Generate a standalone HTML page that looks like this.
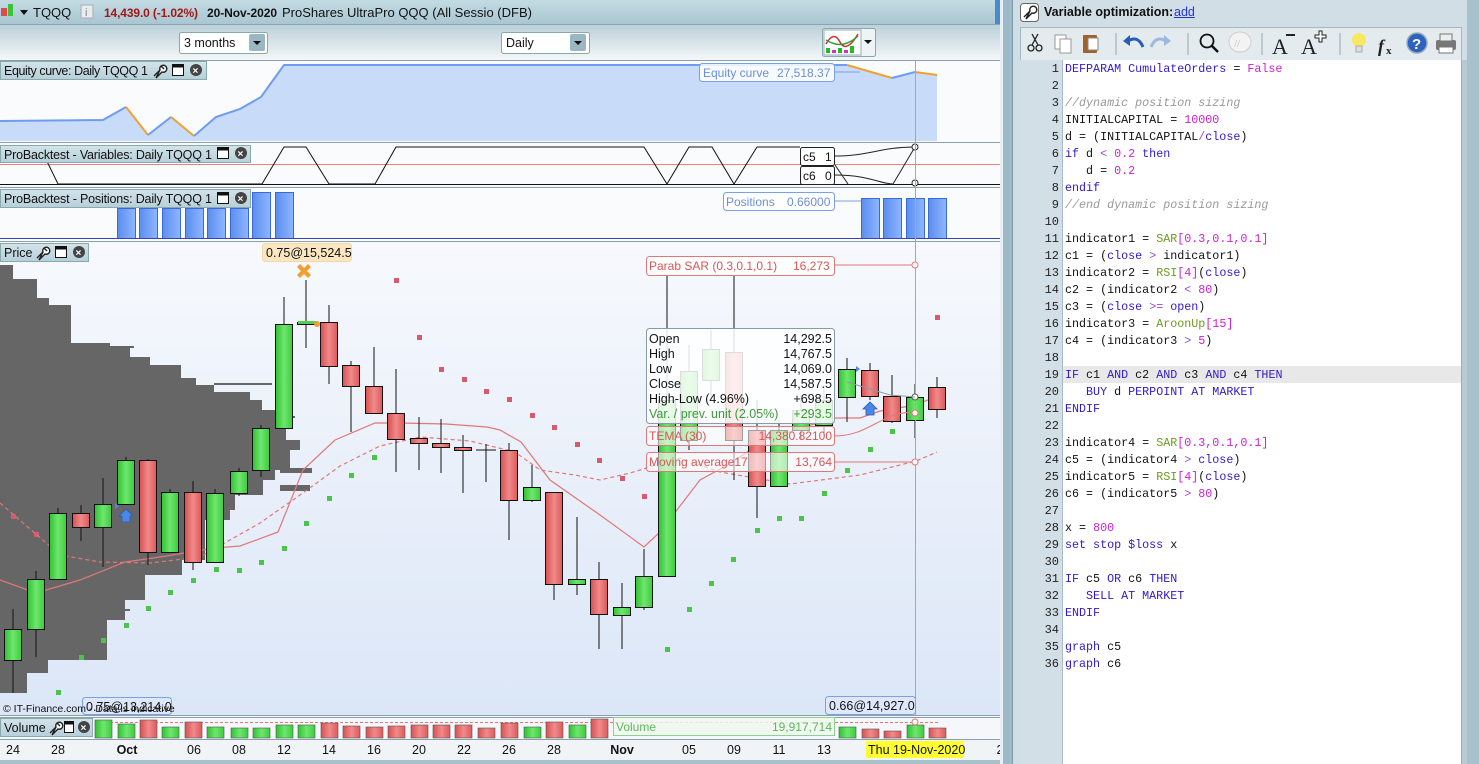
<!DOCTYPE html>
<html><head><meta charset="utf-8"><style>
*{margin:0;padding:0;box-sizing:border-box}
body{width:1479px;height:764px;overflow:hidden;background:#d1dee5;font-family:"Liberation Sans",sans-serif;position:relative}
.abs{position:absolute}
.code{position:absolute;left:1063px;top:60px;width:398px;height:704px;background:#fff}
.gut{position:absolute;left:1020px;top:60px;width:43px;height:704px;background:#d3dfe6;border-right:1px solid #a9bcc6}
.ln{position:absolute;right:4px;font:12px "Liberation Mono",monospace;color:#222;text-align:right}
.cl{position:absolute;left:2px;font:11.7px "Liberation Mono",monospace;color:#111;white-space:pre;letter-spacing:0}
.k{color:#3318cc}.n{color:#d21ed2}.c{color:#999;font-style:italic}.f{color:#6d9a1e}.o{color:#9a4ad0}
</style></head><body>
<svg class="abs" style="left:0;top:0" width="1000" height="764" xmlns="http://www.w3.org/2000/svg" font-family="Liberation Sans, sans-serif">
<defs>
<linearGradient id="tb" x1="0" y1="0" x2="0" y2="1"><stop offset="0" stop-color="#c4dbe3"/><stop offset="1" stop-color="#a9c6d2"/></linearGradient>
<linearGradient id="tb2" x1="0" y1="0" x2="0" y2="1"><stop offset="0" stop-color="#b9cfd8"/><stop offset="1" stop-color="#f4f7f8"/></linearGradient>
<linearGradient id="pr" x1="0" y1="0" x2="0" y2="1"><stop offset="0" stop-color="#f7f9fd"/><stop offset="1" stop-color="#dbe6f7"/></linearGradient>
<linearGradient id="gr" x1="0" y1="0" x2="1" y2="0"><stop offset="0" stop-color="#2fc22f"/><stop offset=".5" stop-color="#6fe66f"/><stop offset="1" stop-color="#3ccc3c"/></linearGradient>
<linearGradient id="rd" x1="0" y1="0" x2="1" y2="0"><stop offset="0" stop-color="#d85050"/><stop offset=".5" stop-color="#f08a8a"/><stop offset="1" stop-color="#dd5a5a"/></linearGradient>
<linearGradient id="bl" x1="0" y1="0" x2="1" y2="0"><stop offset="0" stop-color="#5b8ef0"/><stop offset="1" stop-color="#8fb6ff"/></linearGradient>
<linearGradient id="hd" x1="0" y1="0" x2="0" y2="1"><stop offset="0" stop-color="#d3e3ea"/><stop offset="1" stop-color="#b7cfd9"/></linearGradient>
<g id="wr"><path d="M1 13L7 7M7 7A3.5 3.5 0 1 1 9 9L3 15Z M8 3L11 6" stroke="#222" stroke-width="1.4" fill="#fff"/></g>
</defs>
<rect width="1000" height="764" fill="#f5f7f8"/>
<rect x="0" y="0" width="1000" height="24" fill="url(#tb)"/>
<rect x="995" y="0" width="5" height="24" fill="#4a88d0"/>
<rect x="1" y="8" width="6" height="8" fill="#e04a4a"/><rect x="8" y="4" width="5" height="12" fill="#3ac43a"/>
<path d="M20 10h8l-4 5z" fill="#111"/>
<text x="33" y="17" font-size="13" fill="#111">TQQQ</text>
<rect x="81" y="5" width="12" height="13" fill="#e8ecee" stroke="#aab"/><text x="85" y="16" font-size="11" fill="#888">i</text>
<text x="104" y="17" font-size="12" font-weight="bold" fill="#a01818" textLength="94">14,439.0 (-1.02%)</text>
<text x="207" y="17" font-size="12" font-weight="bold" fill="#111" textLength="70">20-Nov-2020</text>
<text x="282" y="17" font-size="13" fill="#111">ProShares UltraPro QQQ (All Sessio (DFB)</text>
<rect x="0" y="24" width="1000" height="36" fill="url(#tb2)"/>
<line x1="0" y1="24.5" x2="1000" y2="24.5" stroke="#8aa4b0"/>
<rect x="179.5" y="32.5" width="88" height="21" rx="2" fill="#fff" stroke="#8aa"/><text x="184" y="47" font-size="12.5" fill="#111">3 months</text>
<rect x="249" y="34" width="16" height="17" rx="2" fill="#9bb7c4"/><path d="M253 41h8l-4 4z" fill="#111"/>
<rect x="501.5" y="32.5" width="88" height="21" rx="2" fill="#fff" stroke="#8aa"/><text x="506" y="47" font-size="12.5" fill="#111">Daily</text>
<rect x="570" y="34" width="16" height="17" rx="2" fill="#9bb7c4"/><path d="M574 41h8l-4 4z" fill="#111"/>
<rect x="822.5" y="28.5" width="53" height="28" rx="2" fill="#eef3f5" stroke="#8aa"/>
<rect x="824" y="30" width="37" height="25" fill="#fff" stroke="#9ab"/>
<path d="M826 44q8-14 14-2t18-8" stroke="#c33" fill="none" stroke-width="1.5"/><path d="M826 40q10 6 18 4t14-8" stroke="#393" fill="none" stroke-width="1.5"/>
<rect x="826" y="48" width="4" height="5" fill="#2b2"/><rect x="832" y="50" width="4" height="3" fill="#c3c"/><rect x="838" y="48" width="4" height="5" fill="#2b2"/><rect x="844" y="50" width="4" height="3" fill="#c3c"/><rect x="850" y="46" width="4" height="7" fill="#2b2"/>
<path d="M864 40h8l-4 4z" fill="#111"/>
<rect x="0" y="60" width="1000" height="82" fill="#fafbfd"/>
<line x1="0" y1="60.5" x2="1000" y2="60.5" stroke="#8aa0ab"/>
<path d="M0 121L103 120L126 107L148 135L171 117L194 136L216 117L240 109L261 97L284 65L847 65L892 78L915 72L937 75L937 141L0 141Z" fill="#c8dcfa"/>
<path d="M0 121L103 120L126 107" stroke="#6f9cf0" stroke-width="2" fill="none"/>
<path d="M126 107L148 135" stroke="#f0a030" stroke-width="2"/><path d="M148 135L171 117" stroke="#6f9cf0" stroke-width="2"/>
<path d="M171 117L194 136" stroke="#f0a030" stroke-width="2"/>
<path d="M194 136L216 117L240 109L261 97L284 65L847 65" stroke="#6f9cf0" stroke-width="2" fill="none"/>
<path d="M847 65L892 78" stroke="#f0a030" stroke-width="2"/><path d="M892 78L915 72" stroke="#6f9cf0" stroke-width="2"/><path d="M915 72L937 75" stroke="#f0a030" stroke-width="2"/>
<rect x="0.5" y="61.5" width="206" height="18" fill="url(#hd)" stroke="#8aa"/>
<text x="4" y="75" font-size="12.5" fill="#111" textLength="144">Equity curve: Daily TQQQ 1</text>
<use href="#wr" x="153" y="63"/>
<rect x="172.5" y="64.5" width="11" height="11" fill="#fff" stroke="#111"/><rect x="172.5" y="64.5" width="11" height="3" fill="#111"/>
<circle cx="196" cy="70" r="6" fill="#444"/><text x="192.5" y="74" font-size="10" fill="#fff" font-weight="bold">×</text>
<rect x="699.5" y="63.5" width="135" height="18" rx="3" fill="#fff" fill-opacity=".85" stroke="#7aa0e8"/>
<text x="703" y="77" font-size="12" fill="#6b8fd8">Equity curve</text><text x="777" y="77" font-size="12" fill="#6b8fd8">27,518.37</text>
<line x1="834" y1="72" x2="860" y2="72" stroke="#7aa0e8"/>
<rect x="0" y="142" width="1000" height="44" fill="#fafbfd"/>
<line x1="0" y1="142.5" x2="1000" y2="142.5" stroke="#8aa0ab"/>
<line x1="0" y1="164.5" x2="1000" y2="164.5" stroke="#f08080"/>
<line x1="0" y1="184.5" x2="1000" y2="184.5" stroke="#111"/>
<path d="M40 147L58 184L262 184L284 147L306 147L329 184L375 184L396 147L644 147L667 184L689 147L712 147L734 184L757 147L800 147" stroke="#111" fill="none"/>
<path d="M834 156C870 156 880 147 915 147M834 175C870 175 880 184 893 184L915 147M835 165L848 184" stroke="#222" fill="none"/>
<circle cx="915" cy="147" r="3" fill="#fff" stroke="#222"/><circle cx="915" cy="183" r="3" fill="#fff" stroke="#222"/>
<rect x="800.5" y="147.5" width="34" height="18" rx="2" fill="#fff" stroke="#222"/><text x="803" y="161" font-size="12" fill="#111">c5</text><text x="825" y="161" font-size="12" fill="#111">1</text>
<rect x="800.5" y="166.5" width="34" height="18" rx="2" fill="#fff" stroke="#222"/><text x="803" y="180" font-size="12" fill="#111">c6</text><text x="825" y="180" font-size="12" fill="#111">0</text>
<rect x="0.5" y="145.5" width="250" height="17" fill="url(#hd)" stroke="#8aa"/>
<text x="4" y="159" font-size="12.5" fill="#111" textLength="208">ProBacktest - Variables: Daily TQQQ 1</text>
<rect x="217.5" y="147.5" width="11" height="11" fill="#fff" stroke="#111"/><rect x="217.5" y="147.5" width="11" height="3" fill="#111"/>
<circle cx="241" cy="153" r="6" fill="#444"/><text x="237.5" y="157" font-size="10" fill="#fff" font-weight="bold">×</text>
<rect x="0" y="187" width="1000" height="54" fill="#fafbfd"/>
<line x1="0" y1="187.5" x2="1000" y2="187.5" stroke="#8aa0ab"/>
<g fill="url(#bl)" stroke="#3a6ad8">
<rect x="117.5" y="208.5" width="18" height="30"/><rect x="139.5" y="208.5" width="18" height="30"/><rect x="162.5" y="208.5" width="18" height="30"/><rect x="185.5" y="208.5" width="18" height="30"/><rect x="207.5" y="208.5" width="18" height="30"/><rect x="230.5" y="208.5" width="18" height="30"/>
<rect x="252.5" y="192.5" width="18" height="46"/><rect x="275.5" y="192.5" width="18" height="46"/>
<rect x="861.5" y="198.5" width="18" height="40"/><rect x="883.5" y="198.5" width="18" height="40"/><rect x="906.5" y="198.5" width="18" height="40"/><rect x="928.5" y="198.5" width="18" height="40"/>
</g>
<line x1="0" y1="238.5" x2="1000" y2="238.5" stroke="#3344bb"/>
<rect x="723.5" y="192.5" width="111" height="18" rx="3" fill="#fff" fill-opacity=".9" stroke="#7aa0e8"/>
<text x="726" y="206" font-size="12" fill="#6b8fd8">Positions</text><text x="787" y="206" font-size="12" fill="#6b8fd8">0.66000</text>
<line x1="834" y1="201" x2="861" y2="201" stroke="#7aa0e8"/>
<rect x="0.5" y="189.5" width="250" height="18" fill="url(#hd)" stroke="#8aa"/>
<text x="4" y="203" font-size="12.5" fill="#111" textLength="208">ProBacktest - Positions: Daily TQQQ 1</text>
<rect x="217.5" y="192.5" width="11" height="11" fill="#fff" stroke="#111"/><rect x="217.5" y="192.5" width="11" height="3" fill="#111"/>
<circle cx="241" cy="198" r="6" fill="#444"/><text x="237.5" y="202" font-size="10" fill="#fff" font-weight="bold">×</text>
<rect x="0" y="241" width="1000" height="475" fill="url(#pr)"/>
<line x1="0" y1="241.5" x2="1000" y2="241.5" stroke="#8aa0ab"/>
<path d="M0 265H13V279H37V298H49V305H71V343H110V348H130V357H150V365H181V378H196V385H214V392H250V400H262V410H280V420H292V428H286V440H300V450H290V470H275V480H263V495H235V510H230V520H205V560H182V575H145V600H125V620H107V660H48V673H27V693H0Z" fill="#666"/>
<g fill="#666"><rect x="110" y="346" width="24" height="2"/><rect x="214" y="383" width="58" height="2"/><rect x="255" y="416" width="40" height="2"/><rect x="280" y="468" width="32" height="5"/><rect x="280" y="485" width="30" height="6"/><rect x="200" y="440" width="97" height="3"/><rect x="130" y="570" width="20" height="2"/><rect x="107" y="609" width="23" height="2"/></g>
<g fill="#d85a6e"><rect x="11" y="514" width="5" height="5"/><rect x="34" y="532" width="5" height="5"/><rect x="394" y="278" width="5" height="5"/><rect x="417" y="335" width="5" height="5"/><rect x="439" y="367" width="5" height="5"/><rect x="462" y="377" width="5" height="5"/><rect x="484" y="389" width="5" height="5"/><rect x="507" y="397" width="5" height="5"/><rect x="530" y="413" width="5" height="5"/><rect x="552" y="425" width="5" height="5"/><rect x="575" y="442" width="5" height="5"/><rect x="597" y="458" width="5" height="5"/><rect x="620" y="476" width="5" height="5"/><rect x="642" y="494" width="5" height="5"/><rect x="935" y="315" width="5" height="5"/></g>
<g fill="#4cc44c"><rect x="56" y="690" width="5" height="5"/><rect x="79" y="655" width="5" height="5"/><rect x="101" y="638" width="5" height="5"/><rect x="124" y="623" width="5" height="5"/><rect x="146" y="606" width="5" height="5"/><rect x="168" y="590" width="5" height="5"/><rect x="191" y="578" width="5" height="5"/><rect x="214" y="567" width="5" height="5"/><rect x="237" y="568" width="5" height="5"/><rect x="259" y="560" width="5" height="5"/><rect x="282" y="546" width="5" height="5"/><rect x="304" y="521" width="5" height="5"/><rect x="327" y="496" width="5" height="5"/><rect x="349" y="473" width="5" height="5"/><rect x="372" y="455" width="5" height="5"/><rect x="665" y="647" width="5" height="5"/><rect x="687" y="607" width="5" height="5"/><rect x="709" y="581" width="5" height="5"/><rect x="731" y="557" width="5" height="5"/><rect x="755" y="528" width="5" height="5"/><rect x="777" y="516" width="5" height="5"/><rect x="799" y="516" width="5" height="5"/><rect x="822" y="491" width="5" height="5"/><rect x="845" y="468" width="5" height="5"/><rect x="868" y="447" width="5" height="5"/><rect x="890" y="429" width="5" height="5"/></g>
<polyline points="0,580 36,593 80,580 125,562 160,557 215,548 240,546 278,532 303,470 335,440 375,423 400,423 446,424 487,427 500,430 521,442 550,480 600,515 644,547 660,532 700,480 733,462 764,440 833,418 860,418 880,411 916,405 937,396" fill="none" stroke="#e07878" stroke-width="1.2"/>
<polyline points="0,503 60,555 100,562 150,563 200,557 260,523 300,495 340,466 380,446 420,437 470,441 515,452 540,470 575,475 600,480 630,473 680,458 720,472 790,484 860,475 916,461 937,452" fill="none" stroke="#e07878" stroke-width="1.2" stroke-dasharray="4,3"/>
<g stroke="#111" stroke-width="1">
<path d="M13 609V693M36 571V657M58 508V579M81 505V541M103 478V567M126 457V504M148 459V565M170 489V552M193 481V570M215 489V562M239 468V496M261 425V477M284 297V428M306 280V348M329 305V384M351 361V432M374 347V413M396 369V472M419 417V470M441 419V473M463 435V493M486 444V482M476 450H496M509 443V540M532 465V502M554 492V600M577 517V595M599 562V649M622 583V649M644 549V610M667 276V576M689 345V450M711 330V400M734 276V480M757 400V518M779 420V486M801 395V440M824 385V435M847 358V422M870 363V400M892 375V423M915 384V438M937 377V418"/>
<g fill="url(#gr)">
<rect x="4.5" y="629.5" width="17" height="31"/><rect x="27.5" y="579.5" width="17" height="50"/><rect x="49.5" y="513.5" width="17" height="66"/><rect x="94.5" y="504.5" width="17" height="23"/><rect x="117.5" y="460.5" width="17" height="44"/><rect x="161.5" y="492.5" width="17" height="60"/><rect x="206.5" y="493.5" width="17" height="69"/><rect x="230.5" y="471.5" width="17" height="22"/><rect x="252.5" y="428.5" width="17" height="42"/><rect x="275.5" y="324.5" width="17" height="104"/><rect x="297.5" y="322.5" width="17" height="2"/><rect x="523.5" y="487.5" width="17" height="13"/><rect x="568.5" y="579.5" width="17" height="5"/><rect x="613.5" y="607.5" width="17" height="8"/><rect x="635.5" y="576.5" width="17" height="31"/><rect x="658.5" y="400.5" width="17" height="176"/><rect x="680.5" y="371.5" width="17" height="69"/><rect x="702.5" y="349.5" width="17" height="31"/><rect x="770.5" y="430.5" width="17" height="56"/><rect x="792.5" y="410.5" width="17" height="20"/><rect x="815.5" y="400.5" width="17" height="25"/><rect x="838.5" y="369.5" width="17" height="28"/><rect x="906.5" y="397.5" width="17" height="23"/>
</g>
<g fill="url(#rd)">
<rect x="72.5" y="513.5" width="17" height="14"/><rect x="139.5" y="460.5" width="17" height="92"/><rect x="184.5" y="492.5" width="17" height="70"/><rect x="320.5" y="322.5" width="17" height="44"/><rect x="342.5" y="365.5" width="17" height="21"/><rect x="365.5" y="386.5" width="17" height="27"/><rect x="387.5" y="413.5" width="17" height="26"/><rect x="410.5" y="438.5" width="17" height="5"/><rect x="432.5" y="443.5" width="17" height="4"/><rect x="454.5" y="447.5" width="17" height="3"/><rect x="500.5" y="450.5" width="17" height="50"/><rect x="545.5" y="492.5" width="17" height="92"/><rect x="590.5" y="579.5" width="17" height="35"/><rect x="725.5" y="352.5" width="17" height="88"/><rect x="748.5" y="430.5" width="17" height="56"/><rect x="861.5" y="370.5" width="17" height="26"/><rect x="883.5" y="396.5" width="17" height="25"/><rect x="928.5" y="387.5" width="17" height="22"/>
</g></g>
<rect x="298" y="321" width="18" height="3" fill="#5c5"/>
<path d="M300 264l4 4 4-4 3 3-4 4 4 4-3 3-4-4-4 4-3-3 4-4-4-4z" fill="#f0a030"/>
<circle cx="317" cy="324" r="3" fill="#f0a030"/>
<path d="M122 522v-6h-3l7-7 7 7h-3v6z" fill="#4a88e8" stroke="#2a5ab8" stroke-width=".8"/>
<path d="M866 415v-6h-3l7-7 7 7h-3v6z" fill="#4a88e8" stroke="#2a5ab8" stroke-width=".8"/>
<path d="M115 503l4 3-4 3z M856 366l4 3-4 3z" fill="#4a88e8"/>
<line x1="915.5" y1="60" x2="915.5" y2="738" stroke="#f08890"/>
<path d="M834 265H915M834 462H915M834 436C870 436 880 412 915 412" stroke="#e07878" fill="none"/>
<circle cx="915" cy="265" r="3" fill="#fff" stroke="#e07878"/><circle cx="915" cy="462" r="3" fill="#fff" stroke="#e07878"/><circle cx="915" cy="413" r="3" fill="#fff" stroke="#e07878"/><circle cx="915" cy="397" r="3" fill="#fff" stroke="#555"/>
<path d="M847 382L890 395L915 397" stroke="#8a9aa8" fill="none"/>
<rect x="646.5" y="256.5" width="188" height="19" rx="3" fill="#fff" fill-opacity=".9" stroke="#e07878"/>
<text x="649" y="270" font-size="12" fill="#d55">Parab SAR (0.3,0.1,0.1)</text><text x="793" y="270" font-size="12" fill="#d55">16,273</text>
<rect x="646.5" y="328.5" width="188" height="95" rx="3" fill="#fff" fill-opacity=".86" stroke="#8a9aa8"/>
<g font-size="12.5" fill="#111"><text x="649" y="343">Open</text><text x="649" y="358">High</text><text x="649" y="373">Low</text><text x="649" y="388">Close</text><text x="649" y="403">High-Low (4.96%)</text>
<text x="832" y="343" text-anchor="end">14,292.5</text><text x="832" y="358" text-anchor="end">14,767.5</text><text x="832" y="373" text-anchor="end">14,069.0</text><text x="832" y="388" text-anchor="end">14,587.5</text><text x="832" y="403" text-anchor="end">+698.5</text></g>
<text x="649" y="418" font-size="12.5" fill="#3a9a3a">Var. / prev. unit (2.05%)</text><text x="832" y="418" font-size="12.5" fill="#3a9a3a" text-anchor="end">+293.5</text>
<rect x="646.5" y="426.5" width="188" height="19" rx="3" fill="#fff" fill-opacity=".6" stroke="#e07878"/>
<text x="649" y="440" font-size="12" fill="#d55">TEMA (30)</text><text x="832" y="440" font-size="12" fill="#d55" text-anchor="end">14,380.82100</text>
<rect x="646.5" y="452.5" width="188" height="19" rx="3" fill="#fff" fill-opacity=".6" stroke="#e07878"/>
<text x="649" y="466" font-size="12" fill="#d55">Moving average17</text><text x="832" y="466" font-size="12" fill="#d55" text-anchor="end">13,764</text>
<rect x="262.5" y="243.5" width="89" height="18" rx="3" fill="#fbe6c2" stroke="#f2d7a8"/>
<text x="266" y="257" font-size="12.5" fill="#111">0.75@15,524.5</text>
<rect x="82.5" y="697.5" width="89" height="17" rx="3" fill="#dfe8fa" stroke="#7aa0e8"/>
<text x="86" y="711" font-size="12.5" fill="#111">0.75@13,214.0</text>
<text x="3" y="712" font-size="10.5" fill="#111">© IT-Finance.com - Data is indicative</text>
<rect x="825.5" y="696.5" width="90" height="18" rx="3" fill="#dfe8fa" stroke="#7aa0e8"/>
<text x="829" y="710" font-size="12.5" fill="#111">0.66@14,927.0</text>
<rect x="0.5" y="243.5" width="88" height="18" fill="url(#hd)" stroke="#8aa"/>
<text x="4" y="257" font-size="12.5" fill="#111">Price</text>
<use href="#wr" x="36" y="245"/>
<rect x="55.5" y="246.5" width="11" height="11" fill="#fff" stroke="#111"/><rect x="55.5" y="246.5" width="11" height="3" fill="#111"/>
<circle cx="79" cy="252" r="6" fill="#444"/><text x="75.5" y="256" font-size="10" fill="#fff" font-weight="bold">×</text>
<rect x="0" y="715" width="1000" height="24" fill="#f5f7fa"/>
<line x1="0" y1="715.5" x2="1000" y2="715.5" stroke="#8aa0ab"/><line x1="0" y1="717.5" x2="1000" y2="717.5" stroke="#8aa0ab"/>
<line x1="90" y1="722.5" x2="940" y2="722.5" stroke="#e07878" stroke-dasharray="3,2"/>
<g stroke="#555" stroke-width=".6">
<rect x="95" y="720" width="17" height="18" fill="url(#gr)"/><rect x="118" y="724" width="17" height="14" fill="url(#gr)"/><rect x="140" y="720" width="17" height="18" fill="url(#rd)"/><rect x="162" y="727" width="17" height="11" fill="url(#gr)"/><rect x="185" y="722" width="17" height="16" fill="url(#rd)"/><rect x="207" y="727" width="17" height="11" fill="url(#gr)"/><rect x="231" y="728" width="17" height="10" fill="url(#gr)"/><rect x="253" y="728" width="17" height="10" fill="url(#gr)"/><rect x="276" y="725" width="17" height="13" fill="url(#gr)"/><rect x="298" y="725" width="17" height="13" fill="url(#gr)"/><rect x="321" y="723" width="17" height="15" fill="url(#rd)"/><rect x="343" y="726" width="17" height="12" fill="url(#rd)"/><rect x="366" y="727" width="17" height="11" fill="url(#rd)"/><rect x="388" y="726" width="17" height="12" fill="url(#rd)"/><rect x="411" y="725" width="17" height="13" fill="url(#rd)"/><rect x="433" y="725" width="17" height="13" fill="url(#rd)"/><rect x="455" y="725" width="17" height="13" fill="url(#rd)"/><rect x="478" y="728" width="17" height="10" fill="url(#rd)"/><rect x="501" y="723" width="17" height="15" fill="url(#rd)"/><rect x="524" y="727" width="17" height="11" fill="url(#gr)"/><rect x="546" y="722" width="17" height="16" fill="url(#rd)"/><rect x="569" y="725" width="17" height="13" fill="url(#gr)"/><rect x="591" y="719" width="17" height="19" fill="url(#rd)"/><rect x="839" y="727" width="17" height="11" fill="url(#gr)"/><rect x="862" y="729" width="17" height="9" fill="url(#rd)"/><rect x="884" y="731" width="17" height="7" fill="url(#rd)"/><rect x="907" y="725" width="17" height="13" fill="url(#gr)"/><rect x="929" y="728" width="17" height="10" fill="url(#rd)"/>
</g>
<rect x="613.5" y="717.5" width="221" height="18" fill="#eef8ee" fill-opacity=".85" stroke="#8fd08f"/>
<text x="616" y="731" font-size="12" fill="#5cb85c">Volume</text><text x="832" y="731" font-size="12" fill="#5cb85c" text-anchor="end">19,917,714</text>
<circle cx="915" cy="722" r="3" fill="#fff" stroke="#e07878"/>
<rect x="0.5" y="718.5" width="92" height="18" fill="url(#hd)" stroke="#8aa"/>
<text x="4" y="732" font-size="12.5" fill="#111">Volume</text>
<use href="#wr" x="49" y="720"/>
<rect x="64.5" y="721.5" width="9" height="11" fill="#fff" stroke="#111"/><rect x="64.5" y="721.5" width="9" height="3" fill="#111"/>
<circle cx="84" cy="727" r="6" fill="#444"/><text x="80.5" y="731" font-size="10" fill="#fff" font-weight="bold">×</text>
<rect x="0" y="739" width="1000" height="21" fill="#f1f4f6"/>
<line x1="0" y1="739.5" x2="1000" y2="739.5" stroke="#8aa0ab"/>
<g font-size="12.5" fill="#111" text-anchor="middle"><text x="13" y="754">24</text><text x="58" y="754">28</text><text x="127" y="754" font-weight="bold">Oct</text><text x="194" y="754">06</text><text x="239" y="754">08</text><text x="284" y="754">12</text><text x="329" y="754">14</text><text x="374" y="754">16</text><text x="419" y="754">20</text><text x="464" y="754">22</text><text x="509" y="754">26</text><text x="554" y="754">28</text><text x="622" y="754" font-weight="bold">Nov</text><text x="689" y="754">05</text><text x="734" y="754">09</text><text x="779" y="754">11</text><text x="824" y="754">13</text><text x="1000" y="754">2</text></g>
<rect x="866" y="741" width="98" height="17" fill="#ffff30"/>
<text x="868" y="754" font-size="12.5" fill="#111">Thu 19-Nov-2020</text>
<rect x="0" y="760" width="1000" height="4" fill="#a7c1cd"/>
</svg>
<div class="abs" style="left:1000px;top:0;width:3px;height:764px;background:#e9f0f3"></div>
<div class="abs" style="left:1003px;top:0;width:10px;height:764px;background:#9db8c6;border-right:1px solid #7f9cab"></div>
<svg class="abs" style="left:1020px;top:3px" width="20" height="20"><rect x=".5" y=".5" width="18" height="18" rx="3" fill="#fff" stroke="#666"/><path d="M4 16L10 10M10 10A3.5 3.5 0 1 1 12 12L6 18Z" stroke="#222" stroke-width="1.4" fill="#fff" transform="translate(0,-2)"/></svg>
<div class="abs" style="left:1044px;top:5px;font-size:12.5px;font-weight:bold;color:#111">Variable optimization:</div>
<div class="abs" style="left:1174px;top:5px;font-size:12.5px;color:#2233dd;text-decoration:underline">add</div>
<div class="abs" style="left:1020px;top:27px;width:442px;height:34px;background:#e4ebef;border:1px solid #a6b8c2"></div>
<svg class="abs" style="left:1020px;top:27px" width="442" height="34" font-family="Liberation Serif, serif">
<g stroke="#222" fill="none" stroke-width="1.3"><circle cx="11" cy="21" r="3"/><circle cx="19" cy="21" r="3"/><path d="M12 18L18 7M18 18L12 7"/></g>
<rect x="35" y="8" width="11" height="14" fill="#fff" stroke="#999"/><rect x="40" y="12" width="11" height="14" fill="#fff" stroke="#999"/>
<rect x="63" y="8" width="14" height="18" rx="1" fill="#a0622a"/><rect x="68" y="11" width="10" height="12" fill="#fff" stroke="#888"/>
<line x1="96" y1="6" x2="96" y2="28" stroke="#9aa"/>
<path d="M108 14q10-6 15 6" stroke="#2a5ab8" stroke-width="3" fill="none"/><path d="M103 14l7-6v11z" fill="#2a5ab8"/>
<path d="M146 14q-10-6-15 6" stroke="#9bb8e0" stroke-width="3" fill="none"/><path d="M151 14l-7-6v11z" fill="#9bb8e0"/>
<line x1="168" y1="6" x2="168" y2="28" stroke="#9aa"/>
<circle cx="187" cy="14" r="6.5" stroke="#111" stroke-width="1.8" fill="none"/><path d="M192 19l6 6" stroke="#111" stroke-width="2.5"/>
<ellipse cx="220" cy="15" rx="11" ry="10" fill="#f3f3f3" stroke="#ccc"/><text x="214" y="20" font-size="11" fill="#bbb">//</text>
<line x1="242" y1="6" x2="242" y2="28" stroke="#9aa"/>
<text x="252" y="27" font-size="22" fill="#222">A</text><rect x="266" y="7" width="9" height="2" fill="#222"/>
<text x="281" y="27" font-size="22" fill="#222">A</text><path d="M295 8h4v-4h3v4h4v3h-4v4h-3v-4h-4z" fill="#fff" stroke="#222"/>
<line x1="320" y1="6" x2="320" y2="28" stroke="#9aa"/>
<circle cx="339" cy="13" r="7" fill="#f8e860"/><rect x="336" y="19" width="6" height="6" fill="#ddd" stroke="#aaa"/>
<text x="358" y="25" font-size="18" font-style="italic" font-weight="bold" fill="#222">f</text><text x="366" y="27" font-size="11" font-weight="bold" fill="#222">x</text>
<circle cx="397" cy="16" r="10" fill="#2c62c0" stroke="#9ab" stroke-width="1.5"/><text x="392" y="22" font-size="15" font-weight="bold" fill="#fff" font-family="Liberation Sans">?</text>
<rect x="416" y="13" width="20" height="10" rx="2" fill="#777"/><rect x="420" y="7" width="12" height="7" fill="#eee" stroke="#777"/><rect x="419" y="20" width="14" height="6" fill="#fff" stroke="#777"/>
</svg>
<div class="gut"></div>
<div class="code"></div>
<div class="abs" style="left:1063px;top:366px;width:398px;height:17px;background:#e8e8e8"></div>
<div class="abs" style="left:1461px;top:60px;width:6px;height:704px;background:#b7cbd5;border-left:1px solid #98aeb9"></div>
<div class="abs" style="left:1467px;top:0;width:12px;height:764px;background:#a7c1cd"></div>
<div class="abs" style="left:1020px;top:62px;width:43px">
<div class="ln" style="top:0">1</div><div class="ln" style="top:17px">2</div><div class="ln" style="top:34px">3</div><div class="ln" style="top:51px">4</div><div class="ln" style="top:68px">5</div><div class="ln" style="top:85px">6</div><div class="ln" style="top:102px">7</div><div class="ln" style="top:119px">8</div><div class="ln" style="top:136px">9</div><div class="ln" style="top:153px">10</div><div class="ln" style="top:170px">11</div><div class="ln" style="top:187px">12</div><div class="ln" style="top:204px">13</div><div class="ln" style="top:221px">14</div><div class="ln" style="top:238px">15</div><div class="ln" style="top:255px">16</div><div class="ln" style="top:272px">17</div><div class="ln" style="top:289px">18</div><div class="ln" style="top:306px">19</div><div class="ln" style="top:323px">20</div><div class="ln" style="top:340px">21</div><div class="ln" style="top:357px">22</div><div class="ln" style="top:374px">23</div><div class="ln" style="top:391px">24</div><div class="ln" style="top:408px">25</div><div class="ln" style="top:425px">26</div><div class="ln" style="top:442px">27</div><div class="ln" style="top:459px">28</div><div class="ln" style="top:476px">29</div><div class="ln" style="top:493px">30</div><div class="ln" style="top:510px">31</div><div class="ln" style="top:527px">32</div><div class="ln" style="top:544px">33</div><div class="ln" style="top:561px">34</div><div class="ln" style="top:578px">35</div><div class="ln" style="top:595px">36</div>
</div>
<div class="abs" style="left:1063px;top:62px;width:398px">
<div class="cl" style="top:0"><span class="k">DEFPARAM CumulateOrders</span> = <span class="n">False</span></div>
<div class="cl" style="top:34px"><span class="c">//dynamic position sizing</span></div>
<div class="cl" style="top:51px">INITIALCAPITAL = <span class="n">10000</span></div>
<div class="cl" style="top:68px">d = (INITIALCAPITAL<span class="o">/</span><span class="k">close</span>)</div>
<div class="cl" style="top:85px"><span class="k">if</span> d <span class="o">&lt;</span> <span class="n">0.2</span> <span class="k">then</span></div>
<div class="cl" style="top:102px">   d = <span class="n">0.2</span></div>
<div class="cl" style="top:119px"><span class="k">endif</span></div>
<div class="cl" style="top:136px"><span class="c">//end dynamic position sizing</span></div>
<div class="cl" style="top:170px">indicator1 = <span class="f">SAR</span><span class="n">[0.3,0.1,0.1]</span></div>
<div class="cl" style="top:187px">c1 = (<span class="k">close</span> <span class="o">&gt;</span> indicator1)</div>
<div class="cl" style="top:204px">indicator2 = <span class="f">RSI</span><span class="n">[4]</span>(<span class="k">close</span>)</div>
<div class="cl" style="top:221px">c2 = (indicator2 <span class="o">&lt;</span> <span class="n">80</span>)</div>
<div class="cl" style="top:238px">c3 = (<span class="k">close</span> <span class="o">&gt;=</span> <span class="k">open</span>)</div>
<div class="cl" style="top:255px">indicator3 = <span class="f">AroonUp</span><span class="n">[15]</span></div>
<div class="cl" style="top:272px">c4 = (indicator3 <span class="o">&gt;</span> <span class="n">5</span>)</div>
<div class="cl" style="top:306px"><span class="k">IF</span> c1 <span class="k">AND</span> c2 <span class="k">AND</span> c3 <span class="k">AND</span> c4 <span class="k">THEN</span></div>
<div class="cl" style="top:323px">   <span class="k">BUY</span> d <span class="k">PERPOINT AT MARKET</span></div>
<div class="cl" style="top:340px"><span class="k">ENDIF</span></div>
<div class="cl" style="top:374px">indicator4 = <span class="f">SAR</span><span class="n">[0.3,0.1,0.1]</span></div>
<div class="cl" style="top:391px">c5 = (indicator4 <span class="o">&gt;</span> <span class="k">close</span>)</div>
<div class="cl" style="top:408px">indicator5 = <span class="f">RSI</span><span class="n">[4]</span>(<span class="k">close</span>)</div>
<div class="cl" style="top:425px">c6 = (indicator5 <span class="o">&gt;</span> <span class="n">80</span>)</div>
<div class="cl" style="top:459px">x = <span class="n">800</span></div>
<div class="cl" style="top:476px"><span class="k">set stop $loss</span> x</div>
<div class="cl" style="top:510px"><span class="k">IF</span> c5 <span class="k">OR</span> c6 <span class="k">THEN</span></div>
<div class="cl" style="top:527px">   <span class="k">SELL AT MARKET</span></div>
<div class="cl" style="top:544px"><span class="k">ENDIF</span></div>
<div class="cl" style="top:578px"><span class="k">graph</span> c5</div>
<div class="cl" style="top:595px"><span class="k">graph</span> c6</div>
</div>
</body></html>
